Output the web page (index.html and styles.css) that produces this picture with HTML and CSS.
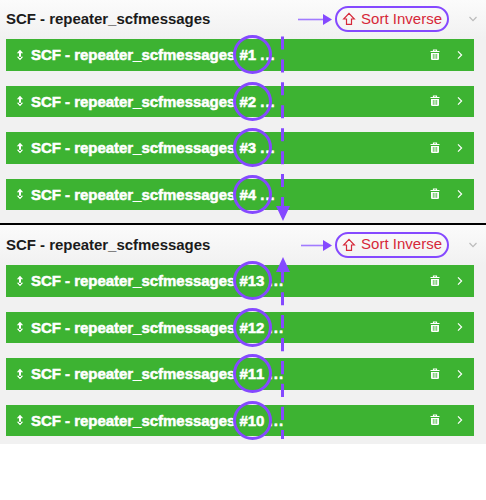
FILE: index.html
```html
<!DOCTYPE html>
<html lang="en">
<head>
<meta charset="utf-8">
<title>Repeater sort order</title>
<link rel="stylesheet" href="styles.css">
</head>
<body>
<svg class="defs" aria-hidden="true">
  <symbol id="move" viewBox="0 0 8 12"><path d="M4 .8 7.200 4.200H.8Z M4 11.200 7.200 7.800H.8Z M3 3h2v6H3Z" fill="#fff"/></symbol>
  <symbol id="trash" viewBox="0 0 10 12"><path d="M3.500 2V1h3v1M.5 2.500h9" fill="none" stroke="#fff" stroke-width="1.200"/><path d="M1 4h8v5.700q0 1.300-1.300 1.300H2.300Q1 11 1 9.700Z" fill="#fff"/><path d="M3.300 5v4.800M5 5v4.800M6.700 5v4.800" stroke="#3db332" stroke-width=".75"/></symbol>
  <symbol id="right" viewBox="0 0 6 10"><path d="m1 1.300 3.600 3.700L1 8.700" fill="none" stroke="#fff" stroke-width="1.200"/></symbol>
  <symbol id="down" viewBox="0 0 10 6"><path d="m1.500 1 3.500 3.700L8.500 1" fill="none" stroke="#bbb" stroke-width="1.200"/></symbol>
  <symbol id="up" viewBox="0 0 14 14"><path d="M7 1.300 12.300 7H9.500v5.300h-5V7H1.700Z" fill="none" stroke="#d62839" stroke-width="1.200"/></symbol>
</svg>
<main class="board">
  <section class="panel">
    <header class="head"><h2>SCF - repeater_scfmessages</h2>
      <svg class="pointer" viewBox="0 0 34 12"><path d="M0 6.500h26" stroke="#a17bff" stroke-width="1.600"/><path d="M25 1v11l9-5.500Z" fill="#8549ff"/></svg>
      <span class="sort"><svg class="up"><use href="#up"/></svg><span class="sort-text">Sort Inverse</span></span>
      <svg class="down"><use href="#down"/></svg></header>
    <div class="rows">
      <div class="row"><svg class="move"><use href="#move"/></svg><span class="label">SCF - repeater_scfmessages <b class="num">#1</b> <span class="dots">...</span></span><svg class="trash"><use href="#trash"/></svg><svg class="right"><use href="#right"/></svg></div>
      <div class="row"><svg class="move"><use href="#move"/></svg><span class="label">SCF - repeater_scfmessages <b class="num">#2</b> <span class="dots">...</span></span><svg class="trash"><use href="#trash"/></svg><svg class="right"><use href="#right"/></svg></div>
      <div class="row"><svg class="move"><use href="#move"/></svg><span class="label">SCF - repeater_scfmessages <b class="num">#3</b> <span class="dots">...</span></span><svg class="trash"><use href="#trash"/></svg><svg class="right"><use href="#right"/></svg></div>
      <div class="row"><svg class="move"><use href="#move"/></svg><span class="label">SCF - repeater_scfmessages <b class="num">#4</b> <span class="dots">...</span></span><svg class="trash"><use href="#trash"/></svg><svg class="right"><use href="#right"/></svg></div>
    </div>
  </section>
  <section class="panel second">
    <header class="head"><h2>SCF - repeater_scfmessages</h2>
      <svg class="pointer" viewBox="0 0 34 12"><path d="M3 6.500h23" stroke="#a17bff" stroke-width="1.600"/><path d="M25 1v11l9-5.500Z" fill="#8549ff"/></svg>
      <span class="sort"><svg class="up"><use href="#up"/></svg><span class="sort-text">Sort Inverse</span></span>
      <svg class="down"><use href="#down"/></svg></header>
    <div class="rows">
      <div class="row"><svg class="move"><use href="#move"/></svg><span class="label">SCF - repeater_scfmessages <b class="num">#13</b> <span class="dots">...</span></span><svg class="trash"><use href="#trash"/></svg><svg class="right"><use href="#right"/></svg></div>
      <div class="row"><svg class="move"><use href="#move"/></svg><span class="label">SCF - repeater_scfmessages <b class="num">#12</b> <span class="dots">...</span></span><svg class="trash"><use href="#trash"/></svg><svg class="right"><use href="#right"/></svg></div>
      <div class="row"><svg class="move"><use href="#move"/></svg><span class="label">SCF - repeater_scfmessages <b class="num no-kern">#11</b> <span class="dots">...</span></span><svg class="trash"><use href="#trash"/></svg><svg class="right"><use href="#right"/></svg></div>
      <div class="row"><svg class="move"><use href="#move"/></svg><span class="label">SCF - repeater_scfmessages <b class="num">#10</b> <span class="dots">...</span></span><svg class="trash"><use href="#trash"/></svg><svg class="right"><use href="#right"/></svg></div>
    </div>
  </section>
  <svg class="marks" viewBox="0 0 486 444" aria-hidden="true">
    <g fill="none" stroke="#8549ff" stroke-width="3">
      <path d="M282.500 36.500v170" stroke-dasharray="13 9.930"/>
      <path d="M282.500 439v-9"/>
      <path d="M282.500 420V281" stroke-dasharray="13.200 9.730"/>
      <path d="M282.500 281v-10"/>
    </g>
    <path d="M276 206h14l-7 15Z M276 272h14l-7-15Z" fill="#8549ff"/>
  </svg>
</main>
</body>
</html>
```
FILE: styles.css
```css
body { margin: 0; background: #fff; font-family: "Liberation Sans", Arial, sans-serif; font-size: 15px; }
svg { display: block; flex: none; }
.defs { position: absolute; width: 0; height: 0; }
.board { position: relative; width: 486px; height: 444px; }
.panel { height: 223px; background: #f1f1f1; }
.second { height: 219px; border-top: 2px solid #000; }
.head { display: flex; align-items: center; box-sizing: border-box; height: 39px; padding: 0 8px 1px 6px; background: linear-gradient(#fbfbfb, #f1f1f1); }
.second .head { height: 40px; }
h2 { margin: 0; font-size: 15px; line-height: 20px; letter-spacing: -.03px; color: #1b1b1b; white-space: nowrap; }
.pointer { width: 34px; height: 12px; margin-left: auto; margin-right: 3px; }
.sort { display: flex; align-items: center; box-sizing: border-box; width: 114px; height: 26px; padding-left: 5px; border: 2px solid #8549ff; border-radius: 13px; color: #d62839; white-space: nowrap; }
.sort-text { line-height: 20px; margin-bottom: 1px; letter-spacing: .02px; }
.up { width: 14px; height: 14px; margin-right: 5px; }
.down { width: 10px; height: 6px; margin-left: 19px; }
.rows { display: grid; gap: 15px; padding: 0 12px 0 6px; grid-template-rows: 32px 31px 32px 31px; }
.row { display: flex; align-items: center; background: #3db332; color: #fff; padding-right: 11px; }
.move { width: 8px; height: 12px; margin: 0 7px 1px 10px; }
.label { font-weight: bold; line-height: 20px; letter-spacing: -.03px; white-space: nowrap; -webkit-text-stroke: .5px #fff; }
.num { position: relative; }
.no-kern { font-kerning: none; }
.dots { letter-spacing: 1px; }
.num::after { content: ""; position: absolute; left: -6px; top: -11px; width: 33px; height: 33px; border: 3px solid #8549ff; border-radius: 50%; }
.trash { width: 10px; height: 12px; margin: 0 17px 1px auto; }
.right { width: 6px; height: 10px; margin-bottom: 1px; }
.marks { position: absolute; inset: 0; width: 486px; height: 444px; }
```
